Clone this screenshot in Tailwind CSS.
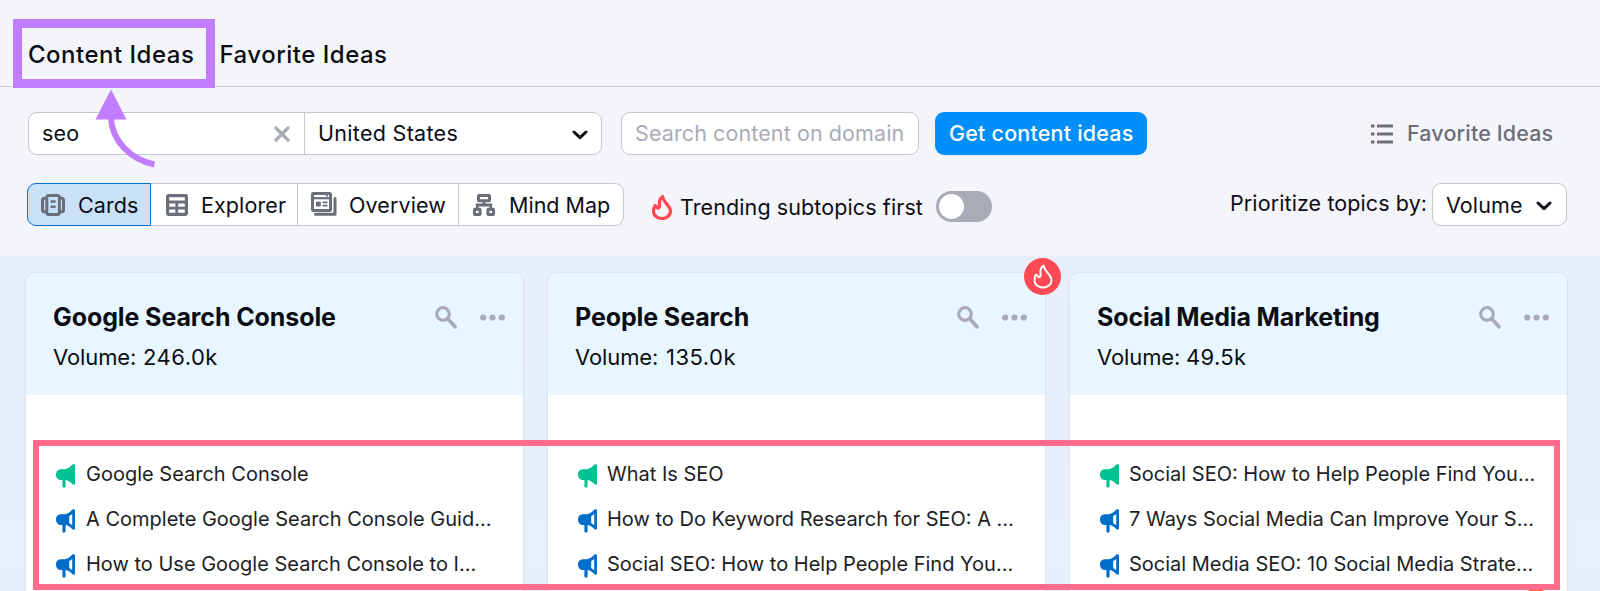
<!doctype html>
<html lang="en">
<head>
    <meta charset="UTF-8">
    <meta name="viewport" content="width=device-width, initial-scale=1.0">
    <title>Content Ideas</title>
    <script src="https://cdn.jsdelivr.net/npm/@tailwindcss/browser@4"></script>
</head>
<body class="bg-[#f4f5fa] font-['Inter',sans-serif] text-[#0c0d14]">
<!-- icon sprite -->
<svg class="hidden">
    <symbol id="flame" viewBox="0 0 20 25">
        <path d="M10.6 1.6C11 5 13 7 15 9.400C17.300 12 18.500 14 18.500 16.300C18.500 20.500 14.500 23.500 10 23.500C5.500 23.500 1.500 20.500 1.500 16.300C1.500 14 2 12.300 3 10.600C4 11 4.600 12.500 6.200 13.300C8.300 12.600 7.500 10.500 7.400 8.500C7.300 5.500 8.300 3 10.600 1.600Z" fill="none" stroke="currentColor" stroke-linejoin="round"/>
    </symbol>
    <symbol id="chevron" viewBox="0 0 16 10">
        <path d="M2 2L8 7.600L14 2" fill="none" stroke="currentColor" stroke-width="3" stroke-linecap="round" stroke-linejoin="round"/>
    </symbol>
    <symbol id="search" viewBox="0 0 22 23">
        <circle cx="8" cy="8" r="6.300" fill="none" stroke="currentColor" stroke-width="3.200"/>
        <path d="M13 13L20 20.800" stroke="currentColor" stroke-width="3.600" stroke-linecap="round"/>
    </symbol>
    <symbol id="dots" viewBox="0 0 25 7">
        <circle cx="3.200" cy="3.500" r="3.100" fill="currentColor"/>
        <circle cx="12.500" cy="3.500" r="3.100" fill="currentColor"/>
        <circle cx="21.800" cy="3.500" r="3.100" fill="currentColor"/>
    </symbol>
    <symbol id="horn" viewBox="0 0 19 24">
        <path d="M0 10.500C0 6.800 2.300 5.200 5.500 5.200H9C12 5 14.500 2.500 16.500 .6C17.300 0 19 .2 19 1.500V19.500C19 20.800 17.500 21.200 16.500 20.300C14.500 18.300 12.500 16.300 9.600 16V22C9.600 24.200 6.400 24.200 6.400 22V16H5.500C2.300 16 0 14.200 0 10.500Z" fill="currentColor"/>
    </symbol>
    <symbol id="horn-open" viewBox="0 0 19 24">
        <path fill-rule="evenodd" d="M0 10.500C0 6.800 2.300 5.200 5.500 5.200H9C12 5 14.500 2.500 16.500 .6C17.300 0 19 .2 19 1.500V19.500C19 20.800 17.500 21.200 16.500 20.300C14.500 18.300 12.500 16.300 9.600 16V22C9.600 24.200 6.400 24.200 6.400 22V16H5.500C2.300 16 0 14.200 0 10.500ZM13.200 7.300V14L16.200 16.200V5Z" fill="currentColor"/>
    </symbol>
</svg>

<div class="relative flex h-[591px] w-[1600px] flex-col overflow-hidden">
    <!-- tabs -->
    <nav class="flex h-[87px] shrink-0 border-b border-[#c8cad6] pt-[37px] pl-7 text-2xl leading-9 font-[450] tracking-[0.5px] whitespace-nowrap">
        <a class="w-[191.5px]">Content Ideas</a>
        <a>Favorite Ideas</a>
    </nav>

    <!-- search form -->
    <div class="mt-[25px] flex h-[43px] shrink-0 items-center pl-7 text-[21.5px] tracking-[0.2px] whitespace-nowrap">
        <div class="flex h-full w-[574px] items-center rounded-[9px] border border-[#c4c7cf] bg-white">
            <div class="flex h-full w-[276px] items-center justify-between border-r border-[#c4c7cf] pr-[14px] pl-[13px]">
                <span>seo</span>
                <svg class="h-4 w-4 text-[#a9abb6]" viewBox="0 0 16 16"><path d="M2 2L14 14M14 2L2 14" stroke="currentColor" stroke-width="3.200" stroke-linecap="round"/></svg>
            </div>
            <div class="flex h-full flex-1 items-center justify-between pr-[13px] pl-[13px] tracking-[0.3px]">
                <span>United States</span>
                <svg class="mt-[3px] h-2.5 w-4"><use href="#chevron"/></svg>
            </div>
        </div>
        <div class="ml-[19px] flex h-full w-[298px] items-center rounded-[9px] border border-[#c4c7cf] bg-white pl-[13px] tracking-[0.1px] text-[#a9abb6]">Search content on domain</div>
        <button class="ml-4 flex h-full w-[212px] items-center rounded-[9px] bg-[#008ff8] pl-[14px] font-medium text-white">Get content ideas</button>
        <div class="ml-[224px] flex items-center text-[#6c6e79]">
            <svg class="h-5 w-[22px]" viewBox="0 0 22 20"><path d="M0 2H3.500M6 2H22M0 10H3.500M6 10H22M0 18H3.500M6 18H22" stroke="currentColor" stroke-width="3"/></svg>
            <span class="ml-[14px] font-[450] tracking-[0.15px]">Favorite Ideas</span>
        </div>
    </div>

    <!-- view switcher -->
    <div class="mt-7 flex h-[43px] shrink-0 items-center pl-[27px] text-[21.5px] tracking-[0.1px] whitespace-nowrap">
        <div class="flex h-full w-[124px] items-center rounded-l-[9px] border border-[#0071cd] bg-[#c9e0f9] pl-[13px]">
            <svg class="h-[22px] w-6 text-[#6c6e79]" viewBox="0 0 24 22" fill="none" stroke="currentColor" stroke-width="3">
                <rect x="5.800" y="1.500" width="12.600" height="19" rx="2"/>
                <path d="M5 4.300H3.500Q1.500 4.300 1.500 6.300V15.700Q1.500 17.700 3.500 17.700H5M19 4.300H20.500Q22.500 4.300 22.500 6.300V15.700Q22.500 17.700 20.500 17.700H19"/>
                <path d="M9.600 7.500H14.600M9.600 12.700H14.600" stroke-width="2.400"/>
            </svg>
            <span class="mt-0.5 ml-[13px]">Cards</span>
        </div>
        <div class="flex h-full w-[147px] items-center border-y border-r border-[#c4c7cf] bg-white pl-[15px]">
            <svg class="h-[22px] w-[22px] text-[#6c6e79]" viewBox="0 0 22 22" fill="none" stroke="currentColor" stroke-width="3.200">
                <rect x="1.600" y="1.600" width="18.800" height="18.800" rx=".8"/>
                <path d="M1 8H21M1 14.200H21M10.800 8V21" stroke-width="2.800"/>
            </svg>
            <span class="mt-0.5 ml-[13px]">Explorer</span>
        </div>
        <div class="flex h-full w-[161px] items-center border-y border-r border-[#c4c7cf] bg-white pl-[13px]">
            <svg class="-mt-px h-6 w-[26px] text-[#6c6e79]" viewBox="0 0 26 24" fill="none" stroke="currentColor" stroke-width="3">
                <rect x="1.500" y="1.500" width="18" height="17" rx=".8"/>
                <path d="M1 6.200H19.500" stroke-width="2.200"/>
                <path d="M15 3.800H17" stroke-width="1.500"/>
                <path d="M24 6.500V22.300H4.500" stroke-linecap="round" stroke-linejoin="round"/>
                <rect x="5" y="9.700" width="4.800" height="4.800" fill="currentColor" stroke="none"/>
                <path d="M11.500 10.300H16.500M11.500 13.700H16.500" stroke-width="1.700"/>
            </svg>
            <span class="mt-0.5 ml-3">Overview</span>
        </div>
        <div class="flex h-full w-[165px] items-center rounded-r-[9px] border-y border-r border-[#c4c7cf] bg-white pl-[14px]">
            <svg class="h-[22px] w-[22px] text-[#6c6e79]" viewBox="0 0 22 22" fill="none" stroke="currentColor" stroke-width="3">
                <rect x="5.500" y="1.500" width="11" height="5.200" rx=".5"/>
                <rect x="1.500" y="15.300" width="5.600" height="5.200" rx=".5"/>
                <rect x="14.900" y="15.300" width="5.600" height="5.200" rx=".5"/>
                <path d="M11 7V11M4.200 15V11H17.800V15" stroke-width="2.800"/>
            </svg>
            <span class="mt-0.5 ml-[14px] tracking-normal">Mind Map</span>
        </div>
        <svg class="mt-[5px] ml-7 h-[25px] w-5 text-[#ff4953]" stroke-width="3.200"><use href="#flame"/></svg>
        <span class="mt-1.5 ml-2">Trending subtopics first</span>
        <div class="absolute left-[935.5px] flex h-[31px] w-[56px] translate-y-[2px] items-center rounded-full bg-[#a9abb6] pl-[3px]">
            <div class="h-[25px] w-[25px] rounded-full bg-white"></div>
        </div>
        <div class="mr-[33px] ml-auto flex h-full items-center">
            <span class="-mt-0.5 w-[202px]">Prioritize topics by:</span>
            <div class="flex h-full w-[135px] items-center justify-between rounded-[9px] border border-[#c4c7cf] bg-white pr-[14px] pl-[13px]">
                <span class="mt-px">Volume</span>
                <svg class="mt-[3px] h-2.5 w-4"><use href="#chevron"/></svg>
            </div>
        </div>
    </div>

    <!-- topic cards -->
    <main class="mt-[30px] flex flex-1 gap-[25px] bg-[#e6eff9] bg-linear-to-b from-[#e7eefa] to-[#e6f0fb] pt-[17px] pl-[26px]">
        <section class="relative h-[400px] w-[497px] rounded-[9px] bg-white shadow-[0_0_2px_rgba(25,27,35,0.18)]">
            <header class="h-[122px] rounded-t-[9px] bg-[#e8f7ff] px-[27px] pt-[26px] whitespace-nowrap">
                <div class="flex items-center">
                    <h2 class="text-[25px] leading-9 font-bold tracking-[-0.1px]">Google Search Console</h2>
                    <svg class="ml-auto h-[23px] w-[22px] text-[#a9abb6]"><use href="#search"/></svg>
                    <svg class="-mr-[9px] ml-[23px] h-[7px] w-[25px] text-[#a9abb6]"><use href="#dots"/></svg>
                </div>
                <p class="mt-1.5 text-[22px] leading-8 tracking-[0.5px]"><span class="inline-block w-[90px] tracking-[-0.1px]">Volume:</span><span>246.0k</span></p>
            </header>
            <ul class="pt-14 pl-[30px] text-xl leading-[45px] whitespace-nowrap">
                <li class="flex h-[45px] items-center text-[#00c192]"><svg class="mt-1 h-6 w-[19px]"><use href="#horn"/></svg><span class="mt-0.5 ml-[11px] text-[#1c1d24]">Google Search Console</span></li>
                <li class="flex h-[45px] items-center text-[#006dca]"><svg class="mt-1 h-6 w-[19px]"><use href="#horn-open"/></svg><span class="mt-0.5 ml-[11px] text-[#1c1d24]">A Complete Google Search Console Guid...</span></li>
                <li class="flex h-[45px] items-center text-[#006dca]"><svg class="mt-1 h-6 w-[19px]"><use href="#horn-open"/></svg><span class="mt-0.5 ml-[11px] text-[#1c1d24]">How to Use Google Search Console to I...</span></li>
            </ul>
        </section>

        <section class="relative h-[400px] w-[497px] rounded-[9px] bg-white shadow-[0_0_2px_rgba(25,27,35,0.18)]">
            <div class="absolute -top-[15px] -right-4 flex h-[37px] w-[37px] items-center justify-center rounded-full bg-[#ff4953]">
                <svg class="h-[25px] w-5 text-white" stroke-width="2"><use href="#flame"/></svg>
            </div>
            <header class="h-[122px] rounded-t-[9px] bg-[#e8f7ff] px-[27px] pt-[26px] whitespace-nowrap">
                <div class="flex items-center">
                    <h2 class="text-[25px] leading-9 font-bold tracking-[-0.1px]">People Search</h2>
                    <svg class="ml-auto h-[23px] w-[22px] text-[#a9abb6]"><use href="#search"/></svg>
                    <svg class="-mr-[9px] ml-[23px] h-[7px] w-[25px] text-[#a9abb6]"><use href="#dots"/></svg>
                </div>
                <p class="mt-1.5 text-[22px] leading-8 tracking-[0.5px]"><span class="inline-block w-[91px] tracking-[-0.1px]">Volume:</span><span>135.0k</span></p>
            </header>
            <ul class="pt-14 pl-[30px] text-xl leading-[45px] whitespace-nowrap">
                <li class="flex h-[45px] items-center text-[#00c192]"><svg class="mt-1 h-6 w-[19px]"><use href="#horn"/></svg><span class="mt-0.5 ml-2.5 text-[#1c1d24]">What Is SEO</span></li>
                <li class="flex h-[45px] items-center text-[#006dca]"><svg class="mt-1 h-6 w-[19px]"><use href="#horn-open"/></svg><span class="mt-0.5 ml-2.5 text-[#1c1d24]">How to Do Keyword Research for SEO: A ...</span></li>
                <li class="flex h-[45px] items-center text-[#006dca]"><svg class="mt-1 h-6 w-[19px]"><use href="#horn-open"/></svg><span class="mt-0.5 ml-2.5 text-[#1c1d24]">Social SEO: How to Help People Find You...</span></li>
            </ul>
        </section>

        <section class="relative h-[400px] w-[497px] rounded-[9px] bg-white shadow-[0_0_2px_rgba(25,27,35,0.18)]">
            <header class="h-[122px] rounded-t-[9px] bg-[#e8f7ff] px-[27px] pt-[26px] whitespace-nowrap">
                <div class="flex items-center">
                    <h2 class="text-[25px] leading-9 font-bold tracking-[-0.15px]">Social Media Marketing</h2>
                    <svg class="ml-auto h-[23px] w-[22px] text-[#a9abb6]"><use href="#search"/></svg>
                    <svg class="-mr-[9px] ml-[23px] h-[7px] w-[25px] text-[#a9abb6]"><use href="#dots"/></svg>
                </div>
                <p class="mt-1.5 text-[22px] leading-8 tracking-[0.3px]"><span class="inline-block w-[89px] tracking-[-0.1px]">Volume:</span><span>49.5k</span></p>
            </header>
            <ul class="pt-14 pl-[30px] text-xl leading-[45px] whitespace-nowrap">
                <li class="flex h-[45px] items-center text-[#00c192]"><svg class="mt-1 h-6 w-[19px]"><use href="#horn"/></svg><span class="mt-0.5 ml-2.5 text-[#1c1d24]">Social SEO: How to Help People Find You...</span></li>
                <li class="flex h-[45px] items-center text-[#006dca]"><svg class="mt-1 h-6 w-[19px]"><use href="#horn-open"/></svg><span class="mt-0.5 ml-2.5 text-[#1c1d24]">7 Ways Social Media Can Improve Your S...</span></li>
                <li class="flex h-[45px] items-center text-[#006dca]"><svg class="mt-1 h-6 w-[19px]"><use href="#horn-open"/></svg><span class="mt-0.5 ml-2.5 text-[#1c1d24]">Social Media SEO: 10 Social Media Strate...</span></li>
            </ul>
            <div class="absolute top-[316px] left-[446px] h-10 w-10 rounded-full bg-[#ff642d]"></div>
        </section>
    </main>

    <!-- callouts -->
    <div class="absolute top-[19px] left-[13px] h-[69px] w-[202px] border-9 border-[#c17dff]"></div>
    <svg class="absolute top-[88px] left-[90px] h-20 w-[70px]" viewBox="0 0 70 80">
        <path d="M21 1.500L36.500 31.500H5.500Z" fill="#c17dff"/>
        <path d="M21 30C22 53 41 72 64.500 76.500" fill="none" stroke="#c17dff" stroke-width="6"/>
    </svg>
    <div class="absolute top-[440px] left-[33px] h-[150px] w-[1527px] border-6 border-[#ff6c8c]"></div>
</div>
</body>
</html>
